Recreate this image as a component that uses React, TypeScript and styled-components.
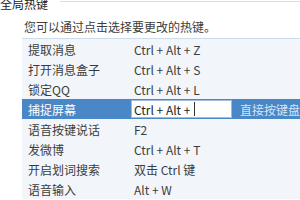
import { styled, createGlobalStyle } from "styled-components";

const GlobalStyle = createGlobalStyle`
  html, body {
    margin: 0;
    padding: 0;
    background: #ffffff;
    overflow: hidden;
  }
  body {
    font-family: "Noto Sans CJK SC", "Liberation Sans", sans-serif;
    font-size: 12px;
    color: #3c3c3c;
  }
`;

type Hotkey = { name: string; keys: string; editing?: boolean };

const hotkeys: Hotkey[] = [
  { name: "提取消息", keys: "Ctrl + Alt + Z" },
  { name: "打开消息盒子", keys: "Ctrl + Alt + S" },
  { name: "锁定QQ", keys: "Ctrl + Alt + L" },
  { name: "捕捉屏幕", keys: "Ctrl + Alt +", editing: true },
  { name: "语音按键说话", keys: "F2" },
  { name: "发微博", keys: "Ctrl + Alt + T" },
  { name: "开启划词搜索", keys: "双击 Ctrl 键" },
  { name: "语音输入", keys: "Alt + W" },
];

const App = () => {
  return (
    <Page>
      <GlobalStyle />
      <GroupHeader>
        <GroupTitle>全局热键</GroupTitle>
        <GroupLine />
      </GroupHeader>
      <Hint>您可以通过点击选择要更改的热键。</Hint>
      <List>
        {hotkeys.map((item) => (
          <Row key={item.name} $selected={!!item.editing}>
            <NameCell>{item.name}</NameCell>
            {item.editing ? (
              <EditCell>
                <KeyInput>
                  <span>{item.keys}</span>
                  <Caret />
                </KeyInput>
                <EditHint>直接按键盘设置热键</EditHint>
              </EditCell>
            ) : (
              <KeyCell>{item.keys}</KeyCell>
            )}
          </Row>
        ))}
      </List>
    </Page>
  );
};

export default App;

const Page = styled.div`
  width: 300px;
  height: 200px;
  overflow: hidden;
  display: flex;
  flex-direction: column;
`;

const GroupHeader = styled.div`
  display: flex;
  align-items: center;
  height: 12px;
  margin-top: -2px;
`;

const GroupTitle = styled.div`
  color: #222222;
  line-height: 12px;
  white-space: nowrap;
  padding-right: 12px;
`;

const GroupLine = styled.div`
  flex: 1;
  height: 1px;
  margin-top: -6px;
  background: #d6dee6;
`;

const Hint = styled.div`
  margin: 9px 0 0 24px;
  height: 16px;
  line-height: 16px;
  color: #3c3c3c;
  white-space: nowrap;
`;

const List = styled.div`
  margin: 3px 0 0 22px;
  border-top: 1px solid #cddcec;
  background: #f2f6fb;
  display: flex;
  flex-direction: column;
`;

const Row = styled.div<{ $selected: boolean }>`
  display: flex;
  align-items: center;
  height: 20px;
  background: ${(p) => (p.$selected ? "#4a87c6" : "transparent")};
  color: ${(p) => (p.$selected ? "#ffffff" : "#3c3c3c")};
  white-space: nowrap;
`;

const NameCell = styled.div`
  width: 106px;
  flex-shrink: 0;
  padding-left: 6px;
  box-sizing: border-box;
`;

const KeyCell = styled.div`
  padding-left: 6px;
`;

const EditCell = styled.div`
  display: flex;
  align-items: center;
  gap: 8px;
  overflow: hidden;
  flex: 1;
  padding-left: 3px;
`;

const KeyInput = styled.div`
  display: flex;
  align-items: center;
  flex-shrink: 0;
  width: 101px;
  height: 18px;
  padding-left: 2px;
  box-sizing: border-box;
  background: #ffffff;
  border: 1px solid #9fbcdc;
  color: #222222;
`;

const Caret = styled.span`
  width: 1px;
  height: 14px;
  margin-left: 3px;
  background: #333333;
`;

const EditHint = styled.div`
  color: #d4e4f5;
`;
